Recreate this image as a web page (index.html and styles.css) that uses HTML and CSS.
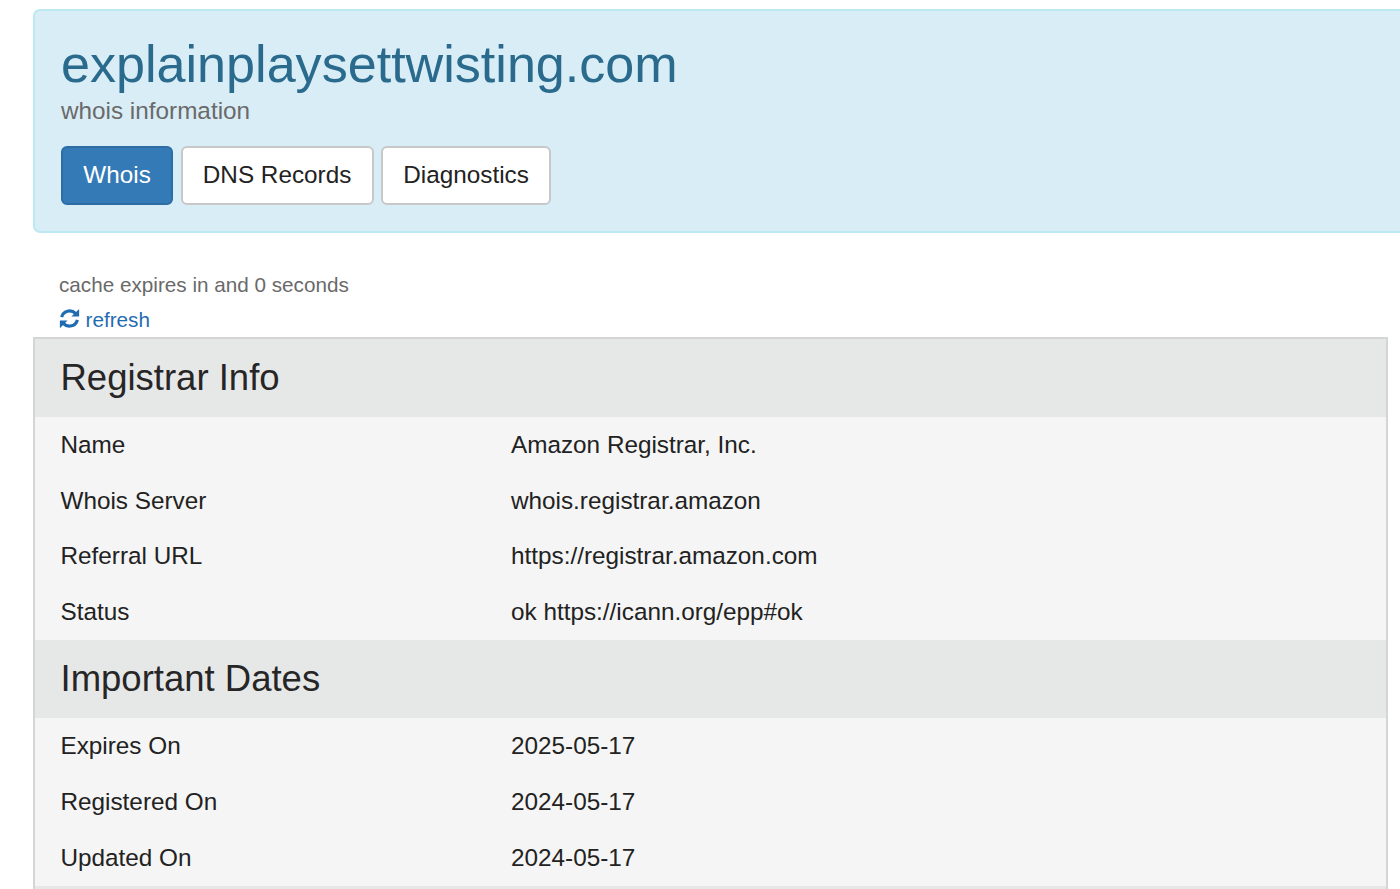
FILE: index.html
```html
<!DOCTYPE html>
<html lang="en">
<head>
<meta charset="utf-8">
<title>explainplaysettwisting.com whois information</title>
<link rel="stylesheet" href="styles.css">
</head>
<body>
<header class="hero">
  <h1 class="hero-title">explainplaysettwisting.com</h1>
  <p class="hero-sub">whois information</p>
  <nav class="tabs">
    <a class="tab tab-active">Whois</a>
    <a class="tab">DNS Records</a>
    <a class="tab">Diagnostics</a>
  </nav>
</header>
<section class="cache">
  <p class="cache-text">cache expires in and 0 seconds</p>
  <a class="refresh">
    <svg class="refresh-icon" viewBox="0 0 24 24" aria-hidden="true">
      <path class="refresh-arc" d="M3 10.500A9.300 9.300 0 0 1 18.800 6.200"/>
      <path class="refresh-arc" d="M21 13.500A9.300 9.300 0 0 1 5.200 17.800"/>
      <path class="refresh-head" d="M23 1v8.800h-8.800z"/>
      <path class="refresh-head" d="M1 23v-8.800h8.800z"/>
    </svg>
    <span>refresh</span>
  </a>
</section>
<main class="panel">
  <h2 class="group-title">Registrar Info</h2>
  <dl class="rows">
    <div class="row"><dt>Name</dt><dd>Amazon Registrar, Inc.</dd></div>
    <div class="row"><dt>Whois Server</dt><dd>whois.registrar.amazon</dd></div>
    <div class="row"><dt>Referral URL</dt><dd>https://registrar.amazon.com</dd></div>
    <div class="row"><dt>Status</dt><dd>ok https://icann.org/epp#ok</dd></div>
  </dl>
  <h2 class="group-title">Important Dates</h2>
  <dl class="rows">
    <div class="row"><dt>Expires On</dt><dd>2025-05-17</dd></div>
    <div class="row"><dt>Registered On</dt><dd>2024-05-17</dd></div>
    <div class="row"><dt>Updated On</dt><dd>2024-05-17</dd></div>
  </dl>
  <div class="group-title"></div>
</main>
</body>
</html>
```
FILE: styles.css
```css
* { box-sizing: border-box; }
html, body { height: 889px; overflow: hidden; }
body {
  margin: 0;
  padding: 9px 12px 0 33px;
  background: #fff;
  color: #222;
  font-family: "Liberation Sans", Arial, sans-serif;
}
.hero {
  height: 224px;
  margin-right: -40px;
  padding: 23px 26px 0;
  background: #d9edf7;
  border: 2px solid #bce8f1;
  border-radius: 7px;
}
.hero-title {
  margin: 0;
  font-size: 52.100px;
  line-height: 60px;
  font-weight: 400;
  color: #2a6a8c;
}
.hero-sub {
  margin: 1px 0 0;
  font-size: 24.300px;
  line-height: 32px;
  color: #6a6a6a;
}
.tabs { display: flex; gap: 7.400px; margin-top: 19px; }
.tab {
  display: block;
  height: 59px;
  padding: 0 20.300px;
  background: #fff;
  border: 2px solid #c8c8c8;
  border-radius: 6px;
  font-size: 24.300px;
  line-height: 54px;
  color: #222;
}
.tab-active { background: #337ab7; border-color: #2e6da4; color: #fff; }
.cache { height: 104px; padding: 37px 0 0 26px; }
.cache-text { margin: 0; font-size: 20.700px; line-height: 30px; color: #6a6a6a; }
.refresh {
  display: flex;
  align-items: center;
  gap: 5.500px;
  margin-top: 5px;
  font-size: 20.700px;
  line-height: 30px;
  color: #1f6cb0;
}
.refresh-icon { width: 21px; height: 21px; margin-bottom: 4px; }
.refresh-arc { fill: none; stroke: currentColor; stroke-width: 3.600; }
.refresh-head { fill: currentColor; }
.panel {
  height: 600px;
  background: #f5f5f5;
  border: 2px solid #d5d5d5;
  border-bottom: 0;
}
.group-title {
  margin: 0;
  height: 78px;
  padding-left: 25.500px;
  background: #e6e8e8;
  font-size: 36.500px;
  line-height: 78px;
  font-weight: 400;
  color: #262626;
}
.rows { margin: 0; padding: 0 0 1px; }
.row {
  display: grid;
  grid-template-columns: 450.500px 1fr;
  height: 55.600px;
  padding-left: 25.500px;
  font-size: 24.300px;
  line-height: 55.600px;
  color: #222;
}
.row dt, .row dd { margin: 0; font-weight: 400; }
```
